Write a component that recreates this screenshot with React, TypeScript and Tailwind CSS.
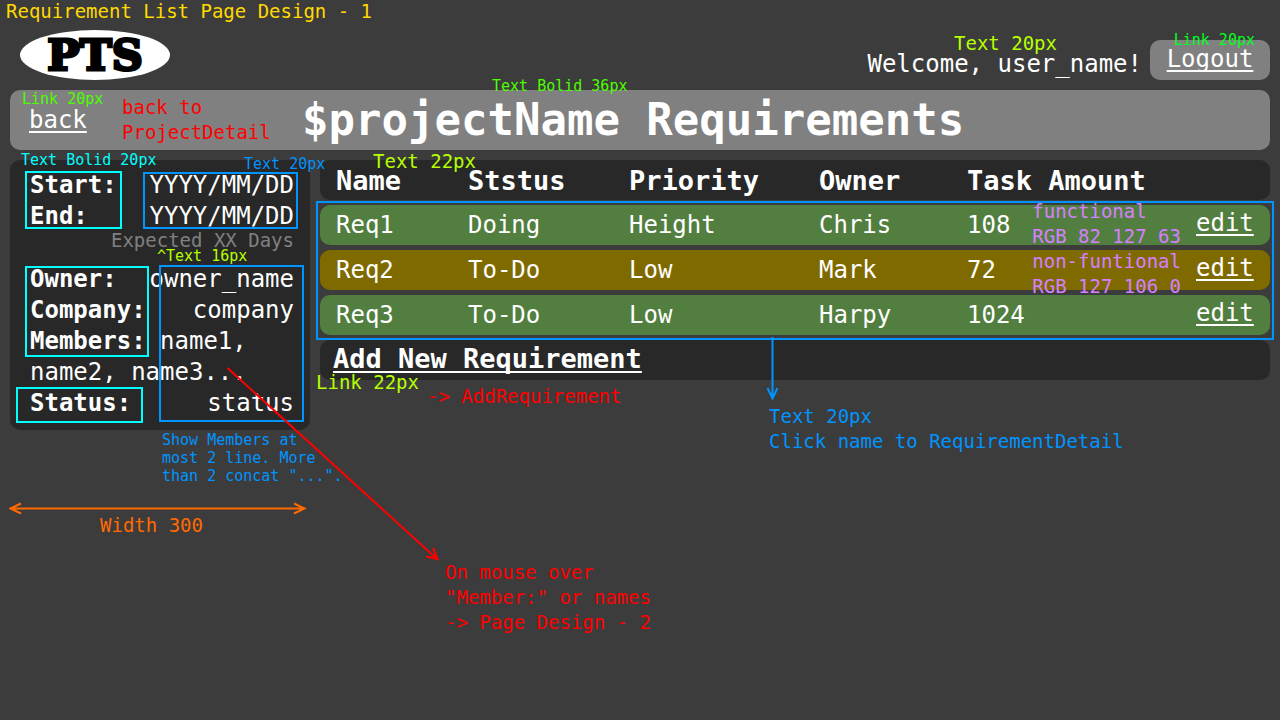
import type { ReactNode } from "react";

type NoteProps = { className: string; small?: boolean; children: ReactNode };

function Note({ className, small, children }: NoteProps) {
  const size = small ? "text-[15px] leading-[18px]" : "text-[19px] leading-[25px]";
  return <p className={`pointer-events-none absolute whitespace-pre ${size} ${className}`}>{children}</p>;
}

function Outline({ className }: { className: string }) {
  return <div className={`pointer-events-none absolute border-2 ${className}`} />;
}

const linkStyle = "underline decoration-2 underline-offset-[3px] [text-decoration-skip-ink:none]";

const requirements = [
  { name: "Req1", status: "Doing", priority: "Height", owner: "Chris", tasks: 108, functional: true },
  { name: "Req2", status: "To-Do", priority: "Low", owner: "Mark", tasks: 72, functional: false },
  { name: "Req3", status: "To-Do", priority: "Low", owner: "Harpy", tasks: 1024, functional: true },
];

function Header() {
  return (
    <header className="flex items-end justify-between">
      <div>
        <p className="-ml-1 pb-[7px] text-[19px] leading-[23px] text-[#ffd800]">Requirement List Page Design - 1</p>
        <div className="ml-[10px] flex h-[50px] w-[150px] items-center justify-center rounded-[50%] bg-white">
          <span className="font-['DejaVu_Serif',serif] text-[43px] leading-[46px] font-bold text-black [-webkit-text-stroke:3px_black]">
            PTS
          </span>
        </div>
      </div>
      <div className="flex items-center gap-2">
        <span className="pt-2">Welcome, user_name!</span>
        <div className="flex h-10 w-[120px] items-center justify-center rounded-[10px] bg-[#808080] pb-0.5">
          <a href="#logout" className={linkStyle}>Logout</a>
        </div>
      </div>
    </header>
  );
}

function Row({ label, children }: { label: string; children: ReactNode }) {
  return (
    <div className="flex justify-between">
      <dt className="font-bold">{label}</dt>
      <dd>{children}</dd>
    </div>
  );
}

function ProjectPanel() {
  return (
    <aside className="w-[300px] shrink-0 self-start rounded-[10px] bg-[#282828] pt-[10px] pr-4 pb-[11px] pl-5">
      <dl>
        <Row label="Start:">YYYY/MM/DD</Row>
        <Row label="End:">YYYY/MM/DD</Row>
        <div className="mb-4 text-right text-[19px] leading-4 text-[#808080]">Expected XX Days</div>
        <Row label="Owner:">owner_name</Row>
        <Row label="Company:">company</Row>
        <div>
          <dt className="inline font-bold">Members:</dt>{" "}
          <dd className="inline">name1, name2, name3...</dd>
        </div>
        <Row label="Status:">status</Row>
      </dl>
    </aside>
  );
}

function RequirementTable() {
  return (
    <section className="min-w-0 grow">
      <div className="relative">
        <table className="-mt-[5px] w-full table-fixed border-separate border-spacing-x-0 border-spacing-y-[5px] text-left">
          <colgroup>
            <col className="w-[132px]" />
            <col className="w-[161px]" />
            <col className="w-[190px]" />
            <col className="w-[148px]" />
            <col />
            <col className="w-[90px]" />
          </colgroup>
          <thead>
            <tr className="h-10 text-[27px] [&>*]:bg-[#282828] [&>*]:p-0 [&>*]:pl-4">
              <th scope="col" className="rounded-l-[10px]">Name</th>
              <th scope="col">Ststus</th>
              <th scope="col">Priority</th>
              <th scope="col">Owner</th>
              <th scope="col">Task Amount</th>
              <td className="rounded-r-[10px]" />
            </tr>
          </thead>
          <tbody>
            {requirements.map((r) => (
              <tr
                key={r.name}
                className={`h-10 [&>*]:pl-4 ${r.functional ? "[&>*]:bg-[#527f3f]" : "[&>*]:bg-[#7f6a00]"}`}
              >
                <td className="rounded-l-[10px]"><a href={`#${r.name}`}>{r.name}</a></td>
                <td>{r.status}</td>
                <td>{r.priority}</td>
                <td>{r.owner}</td>
                <td>{r.tasks}</td>
                <td className="rounded-r-[10px] pb-1">
                  <a href={`#edit-${r.name}`} className={linkStyle}>edit</a>
                </td>
              </tr>
            ))}
          </tbody>
        </table>
        <Outline className="-inset-x-1 top-[46px] bottom-0 border-[#0094ff]" />
      </div>
      <div className="flex h-10 items-center rounded-[10px] bg-[#282828] px-[13px] pb-1">
        <a href="#add" className={`text-[27px] font-bold ${linkStyle}`}>Add New Requirement</a>
      </div>
    </section>
  );
}

function Annotations() {
  return (
    <>
      <Note className="top-[31px] right-[223px] text-[#b6ff00]">Text 20px</Note>
      <Note small className="top-[31px] right-[25px] text-[#00ff21]">Link 20px</Note>
      <Note small className="top-[77px] left-[492px] text-[#4cff00]">Text Bolid 36px</Note>
      <Note small className="top-[90px] left-[22px] text-[#4cff00]">Link 20px</Note>
      <Note className="top-[95px] left-[122px] text-[#ff0000]">{"back to\nProjectDetail"}</Note>
      <Note small className="top-[151px] left-[21px] text-[#00ffff]">Text Bolid 20px</Note>
      <Note small className="top-[155px] left-[244px] text-[#0094ff]">Text 20px</Note>
      <Note className="top-[149px] left-[373px] text-[#b6ff00]">Text 22px</Note>
      <Note small className="top-[247px] left-[157px] text-[#b6ff00]">^Text 16px</Note>
      <Note className="top-[199px] right-[99px] text-[#d67fff]">
        {"functional\nRGB 82 127 63\nnon-funtional\nRGB 127 106 0"}
      </Note>
      <Note className="top-[370px] left-[316px] text-[#b6ff00]">Link 22px</Note>
      <Note className="top-[384px] left-[427px] text-[#ff0000]">{"-> AddRequirement"}</Note>
      <Note className="top-[404px] left-[769px] text-[#0094ff]">{"Text 20px\nClick name to RequirementDetail"}</Note>
      <Note small className="top-[431px] left-[162px] text-[#0094ff]">
        {"Show Members at\nmost 2 line. More\nthan 2 concat \"...\"."}
      </Note>
      <Note className="top-[513px] left-[100px] text-[#ff6a00]">Width 300</Note>
      <Note className="top-[560px] left-[445px] text-[#ff0000]">
        {"On mouse over\n\"Member:\" or names\n-> Page Design - 2"}
      </Note>

      <Outline className="top-[171px] left-[25px] h-[58px] w-[97px] border-[#00ffff]" />
      <Outline className="top-[172px] left-[143px] h-[57px] w-[155px] border-[#0094ff]" />
      <Outline className="top-[266px] left-[25px] h-[91px] w-[124px] border-[#00ffff]" />
      <Outline className="top-[265px] left-[159px] h-[157px] w-[145px] border-[#0094ff]" />
      <Outline className="top-[387px] left-[16px] h-[36px] w-[127px] border-[#00ffff]" />

      <svg aria-hidden="true" className="pointer-events-none absolute top-[502px] left-[9px]" width="298" height="14" fill="none" stroke="#ff6a00" strokeWidth="2">
        <path d="M1 6.5H296M12 1.5L1.5 6.5L12 11.5M285 1.5L295.5 6.5L285 11.5" />
      </svg>
      <svg aria-hidden="true" className="pointer-events-none absolute top-[337px] left-[766px]" width="14" height="64" fill="none" stroke="#0094ff" strokeWidth="2">
        <path d="M6.5 0V61M1.5 51L6.5 61.5L11.5 51" />
      </svg>
      <svg aria-hidden="true" className="pointer-events-none absolute top-[366px] left-[226px]" width="216" height="198" fill="none" stroke="#ff0000" strokeWidth="2">
        <path d="M1.5 2L211 193M200 190.5L211.5 193L207 182" />
      </svg>
    </>
  );
}

export default function App() {
  return (
    <div className="relative min-h-screen bg-[#3c3c3c] px-[10px] font-['DejaVu_Sans_Mono',monospace] text-2xl leading-[31px] text-white">
      <Header />
      <div className="mt-[10px] flex h-[60px] items-center rounded-[10px] bg-[#808080] px-[19px]">
        <a href="#back" className={`w-[273px] shrink-0 ${linkStyle}`}>back</a>
        <h1 className="text-[44px] leading-[60px] font-bold whitespace-nowrap">$projectName Requirements</h1>
      </div>
      <main className="mt-[10px] flex gap-[10px]">
        <ProjectPanel />
        <RequirementTable />
      </main>
      <Annotations />
    </div>
  );
}
